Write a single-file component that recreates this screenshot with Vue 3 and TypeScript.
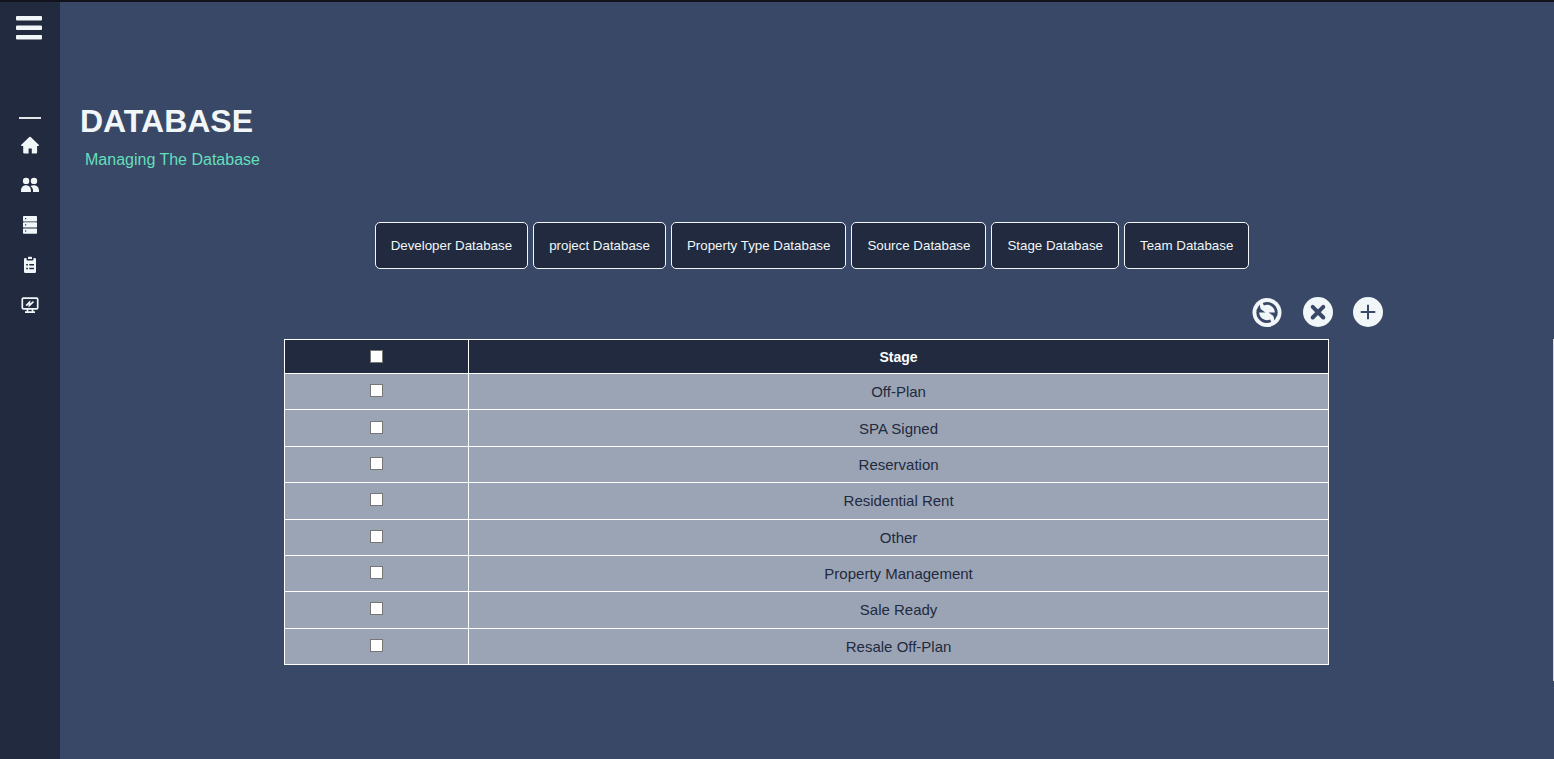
<script setup lang="ts">
import { computed, ref } from 'vue'

interface NavItem {
  label: string
  icon: 'home' | 'users' | 'server' | 'tasks' | 'monitor'
}

const navItems: NavItem[] = [
  { label: 'Home', icon: 'home' },
  { label: 'Users', icon: 'users' },
  { label: 'Database', icon: 'server' },
  { label: 'Tasks', icon: 'tasks' },
  { label: 'Reports', icon: 'monitor' },
]

const databases: string[] = [
  'Developer Database',
  'project Database',
  'Property Type Database',
  'Source Database',
  'Stage Database',
  'Team Database',
]

const stages: string[] = [
  'Off-Plan',
  'SPA Signed',
  'Reservation',
  'Residential Rent',
  'Other',
  'Property Management',
  'Sale Ready',
  'Resale Off-Plan',
]

const selected = ref<string[]>([])

const allSelected = computed<boolean>({
  get: () => selected.value.length === stages.length,
  set: (on) => {
    selected.value = on ? [...stages] : []
  },
})
</script>

<template>
  <div class="app">
    <aside class="sidebar">
      <button class="menu" type="button" aria-label="Toggle menu">
        <svg width="28" height="26" viewBox="0 0 28 26" fill="currentColor">
          <rect x="1" y="1" width="26" height="4.6" rx="1" />
          <rect x="1" y="10.4" width="26" height="4.6" rx="1" />
          <rect x="1" y="20" width="26" height="4.6" rx="1" />
        </svg>
      </button>
      <hr class="divider" />
      <nav class="nav">
        <a v-for="item in navItems" :key="item.icon" href="#" class="nav-link" :aria-label="item.label">
          <svg v-if="item.icon === 'home'" width="20" height="20" viewBox="0 0 20 20" fill="currentColor">
            <path d="M9.300 2.100q.7-.6 1.400 0l8 7.600q.9 1.200-.5 1.200h-1.100v6.500q0 1-1 1h-4.300v-4.900H8.600v4.900H4.200q-1 0-1-1v-6.500H1.800q-1.400 0-.5-1.200z" />
          </svg>
          <svg v-else-if="item.icon === 'users'" width="20" height="20" viewBox="0 0 20 20" fill="currentColor">
            <circle cx="6.100" cy="5.900" r="3.200" />
            <circle cx="14" cy="5.900" r="3.200" />
            <path d="M1 17v-1.400c0-3.300 2-5.400 4.900-5.400s5 2.100 5 5.400V17z" />
            <path d="M10.400 11c1-.6 2.100-.8 3.400-.8 3.100 0 5.200 2.100 5.200 5.400V17h-6v-1.400c0-1.900-.9-3.500-2.600-4.600z" />
          </svg>
          <svg v-else-if="item.icon === 'server'" width="20" height="20" viewBox="0 0 20 20">
            <g fill="currentColor">
              <rect x="3" y="1" width="14" height="5.400" rx=".7" />
              <rect x="3" y="7.200" width="14" height="5.400" rx=".7" />
              <rect x="3" y="13.400" width="14" height="5.400" rx=".7" />
            </g>
            <g fill="#212a3e">
              <rect x="5" y="3" width="1.200" height="1.200" />
              <rect x="5" y="9.200" width="1.200" height="1.200" />
              <rect x="5" y="15.400" width="1.200" height="1.200" />
            </g>
          </svg>
          <svg v-else-if="item.icon === 'tasks'" width="20" height="20" viewBox="0 0 20 20">
            <path
              fill="currentColor"
              d="M5.300 3h1.200v1.200q0 1.200 1.200 1.200h4.600q1.200 0 1.200-1.200V3h1.200Q16 3 16 4.300v12.400q0 1.300-1.300 1.300H5.300Q4 18 4 16.700V4.300Q4 3 5.300 3zM8 2.500Q8 1.800 8.700 1.800h2.600q.7 0 .7.700v1.600H8z"
            />
            <path stroke="#212a3e" stroke-width="1.500" d="M6.200 9.700h1.700M9.300 9.700H14M6.200 13.600h1.700M9.300 13.600H14" />
          </svg>
          <svg v-else width="20" height="20" viewBox="0 0 20 20" fill="none" stroke="currentColor">
            <rect x="2.300" y="3.200" width="15.400" height="10.600" rx="1" stroke-width="1.700" />
            <path stroke-width="1.700" d="M7.500 14v3.200M12.500 14v3.200M5 17.200h10" />
            <path stroke-width="1.700" d="m6.200 10.600 3.200-3.200v3l4-3.800" />
          </svg>
        </a>
      </nav>
    </aside>

    <main class="content">
      <h1 class="title">DATABASE</h1>
      <p class="subtitle">Managing The Database</p>

      <div class="databases">
        <button v-for="name in databases" :key="name" type="button" class="db-button">{{ name }}</button>
      </div>

      <div class="actions">
        <button type="button" class="action refresh" aria-label="Refresh">
          <svg width="30" height="30" viewBox="0 0 30 30">
            <circle cx="15" cy="15.500" r="14.500" fill="currentColor" />
            <g fill="none" stroke="#394867" stroke-width="2.800">
              <path d="M11.300 7.200A9.200 9.200 0 0 1 24.200 16" />
              <path d="M18.700 23.800A9.200 9.200 0 0 1 5.800 15" />
            </g>
            <path fill="#394867" d="M7.600 7.600 8.600 12 13.400 15.500H4.500V13zM22.400 23.400 21.400 19 16.600 15.500H25.500V18z" />
          </svg>
        </button>
        <button type="button" class="action" aria-label="Delete">
          <svg width="30" height="30" viewBox="0 0 30 30">
            <circle cx="15" cy="15" r="15" fill="currentColor" />
            <path stroke="#394867" stroke-width="4" stroke-linecap="round" d="m9.700 9.900 10.600 10.600M20.300 9.900 9.700 20.500" />
          </svg>
        </button>
        <button type="button" class="action" aria-label="Add">
          <svg width="30" height="30" viewBox="0 0 30 30">
            <circle cx="15" cy="15" r="15" fill="currentColor" />
            <path stroke="#394867" stroke-width="2" stroke-linecap="round" d="M15 8.500v13M8.500 15h13" />
          </svg>
        </button>
      </div>

      <section class="table-area">
        <table class="stages">
          <thead>
            <tr>
              <th class="check"><input v-model="allSelected" type="checkbox" aria-label="Select all stages" /></th>
              <th>Stage</th>
            </tr>
          </thead>
          <tbody>
            <tr v-for="stage in stages" :key="stage">
              <td class="check">
                <input v-model="selected" type="checkbox" :value="stage" :aria-label="stage" />
              </td>
              <td>{{ stage }}</td>
            </tr>
          </tbody>
        </table>
      </section>
    </main>
  </div>
</template>

<style>
body {
  margin: 0;
  background: #394867;
}
</style>

<style scoped>
.app {
  box-sizing: border-box;
  display: flex;
  min-height: 100vh;
  border-top: 2px solid #12131d;
  background: #394867;
  color: #f1f6f9;
  font-family: Arial, "Liberation Sans", sans-serif;
}

button {
  font-family: inherit;
  cursor: pointer;
}

svg {
  display: block;
}

.sidebar {
  flex: 0 0 60px;
  display: flex;
  flex-direction: column;
  align-items: center;
  background: #212a3e;
}

.menu {
  margin: 13px 2px 0 0;
  padding: 0;
  border: 0;
  background: none;
  color: inherit;
}

.divider {
  width: 22px;
  height: 2px;
  margin: 76px 0 6px;
  border: 0;
  background: #e4e6e9;
}

.nav {
  display: flex;
  flex-direction: column;
}

.nav-link {
  display: grid;
  place-items: center;
  width: 60px;
  height: 40px;
  color: inherit;
}

.content {
  flex: 1;
  min-width: 0;
}

.title {
  margin: 100px 20px 0;
  font-size: 32px;
  line-height: 38px;
}

.subtitle {
  margin: 10px 25px 0;
  color: #64dfba;
  font-size: 16px;
  line-height: 20px;
}

.databases {
  display: flex;
  flex-wrap: wrap;
  justify-content: center;
  gap: 5px;
  margin-top: 52px;
  padding-left: 10px;
}

.db-button {
  height: 47px;
  padding: 0 15px;
  border: 1px solid #f1f6f9;
  border-radius: 5px;
  background: #212a3e;
  color: #f1f6f9;
  font-weight: 500;
}

.actions {
  display: flex;
  justify-content: flex-end;
  gap: 20px;
  margin: 28px 171px 12px 0;
}

.action {
  padding: 0;
  border: 0;
  background: none;
  color: #f1f6f9;
}

.refresh {
  margin-right: 1px;
}

.table-area {
  padding: 0 0 16px 15%;
  border-right: 1px solid #d3d7de;
}

.stages {
  width: calc(100% / 0.85 * 0.7);
  height: 326px;
  border-collapse: collapse;
  table-layout: fixed;
  text-align: center;
}

.stages th,
.stages td {
  padding: 0;
  border: 1px solid #fff;
}

.stages th {
  height: 33px;
  background: #212a3e;
  color: #fff;
  font-size: 14px;
}

.stages td {
  background: #9ba4b5;
  color: #212a3e;
  font-size: 15px;
}

.stages .check {
  width: 183px;
}

.stages td.check {
  padding-bottom: 2px;
}

.check input {
  display: block;
  width: 13px;
  height: 13px;
  margin: 0 auto;
  border: 1px solid #767676;
  background: #fff;
  appearance: none;
}

.check input:checked {
  background: #212a3e;
  box-shadow: inset 0 0 0 2px #fff;
}
</style>
